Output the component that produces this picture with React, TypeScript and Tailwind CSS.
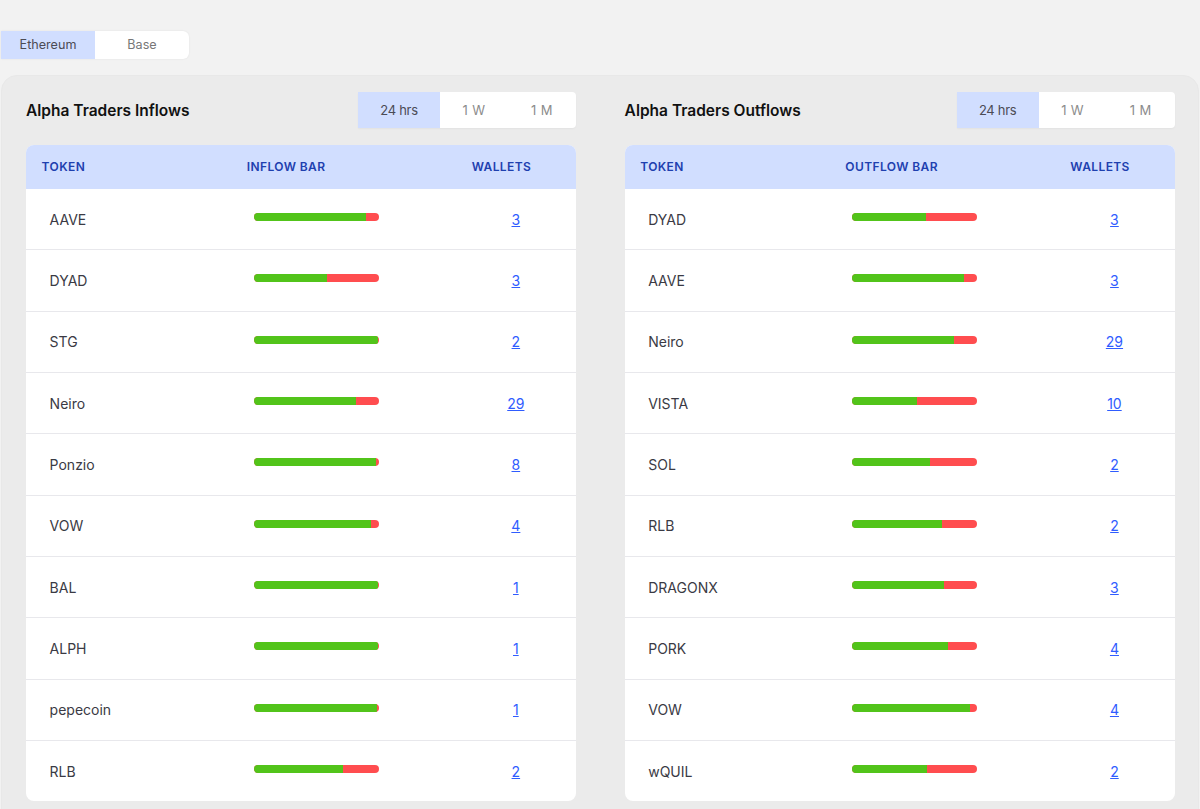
type Row = { token: string; pct: number; wallets: number };

const inflows: Row[] = [
  { token: "AAVE", pct: 89.6, wallets: 3 },
  { token: "DYAD", pct: 59, wallets: 3 },
  { token: "STG", pct: 99.6, wallets: 2 },
  { token: "Neiro", pct: 81.6, wallets: 29 },
  { token: "Ponzio", pct: 98, wallets: 8 },
  { token: "VOW", pct: 94, wallets: 4 },
  { token: "BAL", pct: 99.7, wallets: 1 },
  { token: "ALPH", pct: 99.7, wallets: 1 },
  { token: "pepecoin", pct: 98.4, wallets: 1 },
  { token: "RLB", pct: 71.5, wallets: 2 },
];

const outflows: Row[] = [
  { token: "DYAD", pct: 59, wallets: 3 },
  { token: "AAVE", pct: 89.6, wallets: 3 },
  { token: "Neiro", pct: 81.6, wallets: 29 },
  { token: "VISTA", pct: 52, wallets: 10 },
  { token: "SOL", pct: 62, wallets: 2 },
  { token: "RLB", pct: 71.5, wallets: 2 },
  { token: "DRAGONX", pct: 73.5, wallets: 3 },
  { token: "PORK", pct: 76.5, wallets: 4 },
  { token: "VOW", pct: 94.5, wallets: 4 },
  { token: "wQUIL", pct: 60, wallets: 2 },
];

const FlowCard = ({ title, barLabel, rows }: { title: string; barLabel: string; rows: Row[] }) => (
  <div className="w-[550px]">
    <div className="flex h-[36px] items-center justify-between">
      <h2 className="pt-px text-[15.5px] font-semibold text-[#111111]">{title}</h2>
      <div className="flex h-[36px] w-[218px] overflow-hidden rounded-r-[4px] bg-white text-[13px] shadow-[0_1px_2px_rgba(0,0,0,0.04)]">
        <div className="flex w-[82px] items-center justify-center bg-[#d1deff] pt-px tracking-[-0.3px] text-[#4b4b55]">24 hrs</div>
        <div className="flex w-[68px] items-center justify-center pt-px tracking-[0.4px] text-[#8c8c8c]">1 W</div>
        <div className="flex w-[68px] items-center justify-center pt-px tracking-[0.4px] text-[#8c8c8c]">1 M</div>
      </div>
    </div>
    <div className="mt-[17px] overflow-hidden rounded-[8px] bg-white">
      <div className="grid h-[44px] grid-cols-[204.7px_225px_120.3px] items-center bg-[#d1deff] text-[12px] font-semibold tracking-[0.4px] text-[#1e40af]">
        <div className="px-[15.6px]">TOKEN</div>
        <div className="px-4">{barLabel}</div>
        <div className="px-4">WALLETS</div>
      </div>
      {rows.map((row, i) => (
        <div
          key={row.token}
          className={`grid grid-cols-[204.7px_225px_120.3px] items-center text-[14px] text-[#3a3a44] ${
            i < rows.length - 1 ? "h-[61.33px] border-b border-[#e8e8ec]" : "h-[60.33px]"
          }`}
        >
          <div className="pl-[23.6px]">{row.token}</div>
          <div className="pl-[23px]">
            <div className="mb-[4.4px] flex h-[8px] w-[125px] overflow-hidden rounded-full bg-[#ff4d4f]">
              <div className="h-full bg-[#52c41a]" style={{ width: `${row.pct}%` }} />
            </div>
          </div>
          <div className="text-center">
            <a href="#" className="text-[#2f5cff] underline">
              {row.wallets}
            </a>
          </div>
        </div>
      ))}
    </div>
  </div>
);

export default function App() {
  return (
    <div className="h-[809px] overflow-hidden bg-[#f2f2f2] pl-px pr-px pt-[31px] font-['Inter',sans-serif]">
      <div className="flex h-[28px] w-[188px] overflow-hidden rounded-r-[6px] bg-white text-[12.6px] shadow-[0_0_2px_rgba(0,0,0,0.08)]">
        <div className="flex w-[94px] items-center justify-center bg-[#d1deff] pt-px text-[#4b4b55]">Ethereum</div>
        <div className="flex w-[94px] items-center justify-center pt-px text-[#777777]">Base</div>
      </div>
      <div className="mt-[16px] flex h-[800px] justify-between rounded-t-[16px] border border-[#e8e8e8] bg-[#ebebeb] pl-[24px] pr-[23.4px] pt-[16px]">
        <FlowCard title="Alpha Traders Inflows" barLabel="INFLOW BAR" rows={inflows} />
        <FlowCard title="Alpha Traders Outflows" barLabel="OUTFLOW BAR" rows={outflows} />
      </div>
    </div>
  );
}
